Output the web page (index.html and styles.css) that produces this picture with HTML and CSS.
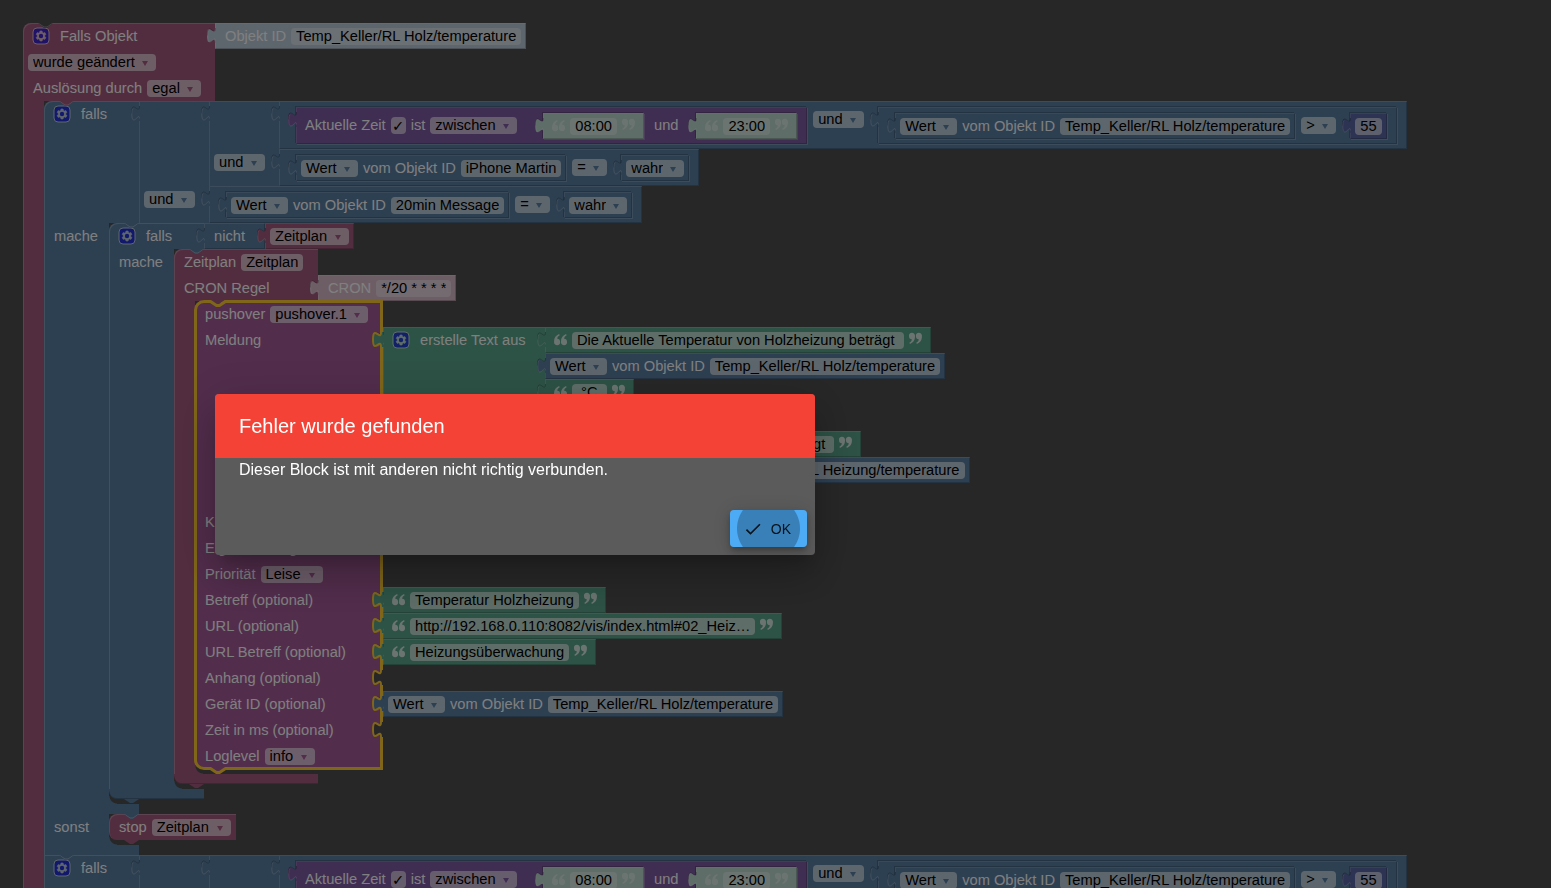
FILE: index.html
```html
<!DOCTYPE html>
<html lang="de">
<head>
<meta charset="utf-8">
<meta name="viewport" content="width=device-width, initial-scale=1">
<title>Blockly – Fehler wurde gefunden</title>
<link rel="stylesheet" href="styles.css">
</head>
<body>
<svg class="defs" aria-hidden="true">
  <symbol id="gear" viewBox="-1 -1 18 18">
    <rect width="16" height="16" rx="4" fill="#00f" stroke="#fff"/>
    <path fill="#fff" stroke="#fff" stroke-width=".5" d="m4.203,7.296 0,1.368 -0.92,0.677 -0.11,0.41 0.9,1.559 0.41,0.11 1.043,-0.457 1.187,0.683 0.127,1.134 0.3,0.3 1.8,0 0.3,-0.299 0.127,-1.138 1.185,-0.682 1.046,0.458 0.409,-0.11 0.9,-1.559 -0.11,-0.41 -0.92,-0.677 0,-1.366 0.92,-0.677 0.11,-0.41 -0.9,-1.559 -0.409,-0.109 -1.046,0.458 -1.185,-0.682 -0.127,-1.138 -0.3,-0.299 -1.8,0 -0.3,0.3 -0.126,1.135 -1.187,0.682 -1.043,-0.457 -0.41,0.11 -0.899,1.559 0.108,0.409z"/>
    <circle cx="8" cy="8" r="2.2" fill="#00f"/>
  </symbol>
  <symbol id="quote" viewBox="0 0 12 12">
    <path d="M5.600 8a2.800 2.800 0 1 1-5.500.2C-.2 4.800 1.600 2.200 4.700 1l.6 1.100C3.800 2.900 3 4 3 5.300A2.700 2.700 0 0 1 5.600 8z"/>
    <path d="M12 8a2.800 2.800 0 1 1-5.500.2C6.200 4.800 8 2.200 11.100 1l.6 1.100C10.200 2.900 9.400 4 9.400 5.300A2.700 2.700 0 0 1 12 8z"/>
  </symbol>
  <symbol id="socket" viewBox="0 0 12 20">
    <path fill="currentColor" d="M12 2H10c0 10-8-8-8 7.500c0 15.500 8-2.500 8 7.500h2z"/>
    <path fill="none" stroke="#fc3" stroke-width="2" d="M10 2c0 10-8-8-8 7.500c0 15.500 8-2.500 8 7.500"/>
  </symbol>
</svg>

<main class="workspace">
 <section class="stmt pink trigger">
  <div class="row">
   <div class="cell"><button class="gear" aria-label="Block bearbeiten"><svg><use href="#gear"/></svg></button><span>Falls Objekt</span></div>
   <div class="val pale-blue"><span>Objekt ID</span><label class="grow" data-v="Temp_Keller/RL Holz/temperature"><input size="1" aria-label="Objekt ID" value="Temp_Keller/RL Holz/temperature"></label></div>
  </div>
  <div class="row"><div class="cell"><label class="drop"><select aria-label="Bedingung"><option>wurde geändert</option></select></label></div></div>
  <div class="row"><div class="cell"><span>Auslösung durch</span><label class="drop"><select aria-label="Auslösung durch"><option>egal</option></select></label></div></div>
  <div class="row">
   <div class="arm"></div>
   <div class="stack">

    <section class="stmt blue branch above-pink">
     <div class="row">
      <div class="cell"><button class="gear" aria-label="Block bearbeiten"><svg><use href="#gear"/></svg></button><span>falls</span></div>
      <div class="val op">
       <div class="lead"></div>
       <div class="val op">
        <div class="lead"></div>
        <div class="val inline">
         <div class="val inline inset violet">
          <span>Aktuelle Zeit</span><input type="checkbox" checked aria-label="Aktuelle Zeit verwenden"><span>ist</span>
          <label class="drop"><select aria-label="Vergleich"><option>zwischen</option></select></label>
          <div class="val text inset pale-green after-drop"><svg class="q"><use href="#quote"/></svg><label class="grow" data-v="08:00"><input size="1" aria-label="Von" value="08:00"></label><svg class="q close"><use href="#quote"/></svg></div>
          <span class="between">und</span>
          <div class="val text inset pale-green"><svg class="q"><use href="#quote"/></svg><label class="grow" data-v="23:00"><input size="1" aria-label="Bis" value="23:00"></label><svg class="q close"><use href="#quote"/></svg></div>
         </div>
         <label class="drop"><select aria-label="Verknüpfung"><option>und</option></select></label>
         <div class="val inline inset">
          <div class="val inset"><label class="drop"><select aria-label="Attribut"><option>Wert</option></select></label><span>vom Objekt ID</span><label class="grow" data-v="Temp_Keller/RL Holz/temperature"><input size="1" aria-label="Objekt ID" value="Temp_Keller/RL Holz/temperature"></label></div>
          <label class="drop"><select aria-label="Operator"><option>&gt;</option></select></label>
          <div class="val inset indigo"><label class="grow" data-v="55"><input size="1" aria-label="Zahl" value="55"></label></div>
         </div>
        </div>
        <div class="lead"><label class="drop"><select aria-label="Verknüpfung"><option>und</option></select></label></div>
        <div class="val inline">
         <div class="val inset"><label class="drop"><select aria-label="Attribut"><option>Wert</option></select></label><span>vom Objekt ID</span><label class="grow" data-v="iPhone Martin"><input size="1" aria-label="Objekt ID" value="iPhone Martin"></label></div>
         <label class="drop"><select aria-label="Operator"><option>=</option></select></label>
         <div class="val inset"><label class="drop"><select aria-label="Wahrheitswert"><option>wahr</option></select></label></div>
        </div>
       </div>
       <div class="lead"><label class="drop"><select aria-label="Verknüpfung"><option>und</option></select></label></div>
       <div class="val inline">
        <div class="val inset"><label class="drop"><select aria-label="Attribut"><option>Wert</option></select></label><span>vom Objekt ID</span><label class="grow" data-v="20min Message"><input size="1" aria-label="Objekt ID" value="20min Message"></label></div>
        <label class="drop"><select aria-label="Operator"><option>=</option></select></label>
        <div class="val inset"><label class="drop"><select aria-label="Wahrheitswert"><option>wahr</option></select></label></div>
       </div>
      </div>
     </div>
     <div class="row">
      <div class="arm"><span>mache</span></div>
      <div class="stack">

       <section class="stmt blue branch above-blue">
        <div class="row">
         <div class="cell"><button class="gear" aria-label="Block bearbeiten"><svg><use href="#gear"/></svg></button><span>falls</span></div>
         <div class="val not"><span>nicht</span></div>
         <div class="val pink"><label class="drop"><select aria-label="Zeitplan"><option>Zeitplan</option></select></label></div>
        </div>
        <div class="row">
         <div class="arm"><span>mache</span></div>
         <div class="stack">

          <section class="stmt pink schedule above-blue">
           <div class="row"><div class="cell"><span>Zeitplan</span><label class="grow" data-v="Zeitplan"><input size="1" aria-label="Name" value="Zeitplan"></label></div></div>
           <div class="row">
            <div class="cell"><span>CRON Regel</span></div>
            <div class="val pale-pink"><span>CRON</span><label class="grow" data-v="*/20 * * * *"><input size="1" aria-label="CRON" value="*/20 * * * *"></label></div>
           </div>
           <div class="row">
            <div class="arm"></div>
            <div class="stack">

             <section class="stmt magenta message selected">
              <div class="row"><div class="cell"><span>pushover</span><label class="drop"><select aria-label="pushover"><option>pushover.1</option></select></label></div></div>
              <div class="row">
               <div class="cell"><span>Meldung</span></div>
               <div class="val join green">
                <div class="joinhead"><button class="gear" aria-label="Block bearbeiten"><svg><use href="#gear"/></svg></button><span>erstelle Text aus</span></div>
                <div class="list">
                 <div class="val text green"><svg class="q"><use href="#quote"/></svg><label class="grow" data-v="Die Aktuelle Temperatur von Holzheizung beträgt "><input size="1" aria-label="Text" value="Die Aktuelle Temperatur von Holzheizung beträgt "></label><svg class="q close"><use href="#quote"/></svg></div>
                 <div class="val blue"><label class="drop"><select aria-label="Attribut"><option>Wert</option></select></label><span>vom Objekt ID</span><label class="grow" data-v="Temp_Keller/RL Holz/temperature"><input size="1" aria-label="Objekt ID" value="Temp_Keller/RL Holz/temperature"></label></div>
                 <div class="val text green"><svg class="q"><use href="#quote"/></svg><label class="grow" data-v=" °C "><input size="1" aria-label="Text" value=" °C "></label><svg class="q close"><use href="#quote"/></svg></div>
                 <div class="val text green"><svg class="q"><use href="#quote"/></svg><label class="grow" data-v=", "><input size="1" aria-label="Text" value=", "></label><svg class="q close"><use href="#quote"/></svg></div>
                 <div class="val text green"><svg class="q"><use href="#quote"/></svg><label class="grow" data-v="Die Temperatur in der Heizung beträgt "><input size="1" aria-label="Text" value="Die Temperatur in der Heizung beträgt "></label><svg class="q close"><use href="#quote"/></svg></div>
                 <div class="val blue"><label class="drop"><select aria-label="Attribut"><option>Wert</option></select></label><span>vom Objekt ID</span><label class="grow" data-v="Temp_Keller/RL Heizung/temperature"><input size="1" aria-label="Objekt ID" value="Temp_Keller/RL Heizung/temperature"></label></div>
                 <div class="val text green"><svg class="q"><use href="#quote"/></svg><label class="grow" data-v=" °C "><input size="1" aria-label="Text" value=" °C "></label><svg class="q close"><use href="#quote"/></svg></div>
                </div>
               </div>
               <svg class="socket green"><use href="#socket"/></svg>
              </div>
              <div class="row"><div class="cell"><span>Klang</span></div></div>
              <div class="row"><div class="cell"><span>Eigener Klang</span></div></div>
              <div class="row"><div class="cell"><span>Priorität</span><label class="drop"><select aria-label="Priorität"><option>Leise</option></select></label></div></div>
              <div class="row">
               <div class="cell"><span>Betreff (optional)</span></div>
               <div class="val text green"><svg class="q"><use href="#quote"/></svg><label class="grow" data-v="Temperatur Holzheizung"><input size="1" aria-label="Betreff" value="Temperatur Holzheizung"></label><svg class="q close"><use href="#quote"/></svg></div>
               <svg class="socket green"><use href="#socket"/></svg>
              </div>
              <div class="row">
               <div class="cell"><span>URL (optional)</span></div>
               <div class="val text green"><svg class="q"><use href="#quote"/></svg><label class="grow" data-v="http://192.168.0.110:8082/vis/index.html#02_Heiz…"><input size="1" aria-label="URL" value="http://192.168.0.110:8082/vis/index.html#02_Heiz…"></label><svg class="q close"><use href="#quote"/></svg></div>
               <svg class="socket green"><use href="#socket"/></svg>
              </div>
              <div class="row">
               <div class="cell"><span>URL Betreff (optional)</span></div>
               <div class="val text green"><svg class="q"><use href="#quote"/></svg><label class="grow" data-v="Heizungsüberwachung"><input size="1" aria-label="URL Betreff" value="Heizungsüberwachung"></label><svg class="q close"><use href="#quote"/></svg></div>
               <svg class="socket green"><use href="#socket"/></svg>
              </div>
              <div class="row"><div class="cell"><span>Anhang (optional)</span></div><svg class="socket"><use href="#socket"/></svg></div>
              <div class="row">
               <div class="cell"><span>Gerät ID (optional)</span></div>
               <div class="val blue"><label class="drop"><select aria-label="Attribut"><option>Wert</option></select></label><span>vom Objekt ID</span><label class="grow" data-v="Temp_Keller/RL Holz/temperature"><input size="1" aria-label="Objekt ID" value="Temp_Keller/RL Holz/temperature"></label></div>
               <svg class="socket blue"><use href="#socket"/></svg>
              </div>
              <div class="row"><div class="cell"><span>Zeit in ms (optional)</span></div><svg class="socket"><use href="#socket"/></svg></div>
              <div class="row"><div class="cell"><span>Loglevel</span><label class="drop"><select aria-label="Loglevel"><option>info</option></select></label></div></div>
              <div class="outline"><svg class="notch-line" viewBox="0 0 21 8"><path d="M3 0h15l-6 4H9z" class="cut"/><path fill="none" stroke="#fc3" stroke-width="3" d="M0 1.500h3.500l6 4h3l6-4H21"/></svg><svg class="tab-line" viewBox="0 0 21 8"><path class="fill" d="M3 0h15v2l-6 4H9L3 2z"/><path fill="none" stroke="#fc3" stroke-width="3" d="M0 1.500h3.500l6 4h3l6-4H21"/></svg></div>
             </section>

            </div>
           </div>
           <div class="bar"></div>
          </section>

         </div>
        </div>
        <div class="bar"></div>
       </section>

      </div>
     </div>
     <div class="bar mid"></div>
     <div class="row">
      <div class="arm"><span>sonst</span></div>
      <div class="stack">
       <section class="stmt pink stop above-blue">
        <div class="row"><div class="cell"><span>stop</span><label class="drop"><select aria-label="Zeitplan stoppen"><option>Zeitplan</option></select></label></div></div>
       </section>
      </div>
     </div>
     <div class="bar last"></div>
    </section>

    <section class="stmt blue branch above-blue next">
     <div class="row">
      <div class="cell"><button class="gear" aria-label="Block bearbeiten"><svg><use href="#gear"/></svg></button><span>falls</span></div>
      <div class="val op">
       <div class="lead"></div>
       <div class="val op">
        <div class="lead"></div>
        <div class="val inline">
         <div class="val inline inset violet">
          <span>Aktuelle Zeit</span><input type="checkbox" checked aria-label="Aktuelle Zeit verwenden"><span>ist</span>
          <label class="drop"><select aria-label="Vergleich"><option>zwischen</option></select></label>
          <div class="val text inset pale-green after-drop"><svg class="q"><use href="#quote"/></svg><label class="grow" data-v="08:00"><input size="1" aria-label="Von" value="08:00"></label><svg class="q close"><use href="#quote"/></svg></div>
          <span class="between">und</span>
          <div class="val text inset pale-green"><svg class="q"><use href="#quote"/></svg><label class="grow" data-v="23:00"><input size="1" aria-label="Bis" value="23:00"></label><svg class="q close"><use href="#quote"/></svg></div>
         </div>
         <label class="drop"><select aria-label="Verknüpfung"><option>und</option></select></label>
         <div class="val inline inset">
          <div class="val inset"><label class="drop"><select aria-label="Attribut"><option>Wert</option></select></label><span>vom Objekt ID</span><label class="grow" data-v="Temp_Keller/RL Holz/temperature"><input size="1" aria-label="Objekt ID" value="Temp_Keller/RL Holz/temperature"></label></div>
          <label class="drop"><select aria-label="Operator"><option>&gt;</option></select></label>
          <div class="val inset indigo"><label class="grow" data-v="55"><input size="1" aria-label="Zahl" value="55"></label></div>
         </div>
        </div>
       </div>
      </div>
     </div>
    </section>

   </div>
  </div>
 </section>
</main>

<div class="backdrop"></div>
<div class="dialog" role="dialog" aria-modal="true" aria-labelledby="dialog-title">
  <h2 id="dialog-title">Fehler wurde gefunden</h2>
  <p>Dieser Block ist mit anderen nicht richtig verbunden.</p>
  <div class="actions">
    <button class="ok"><svg viewBox="0 0 24 24" aria-hidden="true"><path d="M9 16.170 4.830 12l-1.420 1.410L9 19 21 7l-1.410-1.410z"/></svg>OK</button>
  </div>
</div>
</body>
</html>
```
FILE: styles.css
```css
* { box-sizing: border-box; }

body {
  margin: 0;
  height: 100vh;
  overflow: hidden;
  background: #4f4f4f;
  font-family: "Liberation Sans", Arial, sans-serif;
}

input, select, button { font: inherit; margin: 0; border: 0; }
.defs { position: absolute; width: 0; height: 0; }

/* Workspace and block colours */
.workspace {
  padding: 23px;
  color: #fff;
  font-size: 11pt;
  line-height: 17px;
  white-space: nowrap;
}

.pink { --c: #a55b80; }
.blue { --c: #5b80a5; }
.green { --c: #5ba58c; }
.violet { --c: #805ba5; }
.magenta { --c: #a55b99; }
.indigo { --c: #5b67a5; }
.pale-blue { --c: #bdccdb; }
.pale-green { --c: #bddbd1; }
.pale-pink { --c: #dbbdcc; }
.above-pink { --above: #a55b80; }
.above-blue { --above: #5b80a5; }

/* Statement blocks */
.stmt { position: relative; width: max-content; }
.row { display: flex; position: relative; }

.cell, .arm, .bar, .lead, .joinhead { background: var(--c); flex: none; }

.cell {
  display: flex;
  align-items: flex-start;
  gap: 5px;
  width: var(--w);
  min-height: 26px;
  padding: 5px 5px 4px;
  box-shadow: inset 1px 0 rgba(255, 255, 255, .25);
}
.cell > span:first-child, .val > span:first-child { margin-left: 5px; }

.stmt > .row:first-child > .cell {
  border-top-left-radius: 8px;
  box-shadow: inset 1px 1px rgba(255, 255, 255, .25);
}
.stmt.next > .row:first-child > .cell { border-top-left-radius: 0; }

.arm {
  width: var(--arm);
  padding: 5px 0 0 10px;
  box-shadow: inset 1px 0 rgba(255, 255, 255, .25);
}

.bar {
  width: var(--w);
  height: 10px;
  border-bottom-left-radius: 8px;
  box-shadow: inset 0 -1px rgba(0, 0, 0, .2);
}
.bar.mid, .bar.last { border-radius: 0; box-shadow: inset 1px 0 rgba(255, 255, 255, .25); }

.stack { position: relative; padding-bottom: 5px; }
.stack::after {
  content: "";
  position: absolute;
  left: 0;
  bottom: 0;
  width: 8px;
  height: 8px;
  background: radial-gradient(circle at 100% 0, transparent 7px, var(--c) 8px);
}

.stmt::before {
  content: "";
  position: absolute;
  z-index: 1;
  top: 0;
  left: 15px;
  width: 15px;
  height: 5px;
  background:
    url("data:image/svg+xml,%3Csvg xmlns='http://www.w3.org/2000/svg' width='15' height='5'%3E%3Cpath d='M0 0l6 4h3l6-4' fill='none' stroke='white' stroke-opacity='.35'/%3E%3C/svg%3E"),
    var(--above, #4f4f4f);
  clip-path: polygon(0 0, 15px 0, 9px 5px, 6px 5px);
}
.stmt::after {
  content: "";
  position: absolute;
  z-index: 1;
  top: 100%;
  left: 15px;
  width: 15px;
  height: 4px;
  background: var(--c);
  clip-path: polygon(0 0, 15px 0, 9px 4px, 6px 4px);
}

.trigger { --w: 192px; --arm: 21px; }
.branch { --w: 95px; --arm: 65px; }
.schedule { --w: 144px; --arm: 21px; }
.message { --w: 188px; }
.stop { --w: auto; }
.stmt.stop > .row > .cell { border-radius: 8px 0 0 8px; }

/* Value blocks with a puzzle tab on the left */
.val {
  position: relative;
  display: flex;
  align-items: flex-start;
  gap: 5px;
  flex: none;
  width: max-content;
  min-height: 26px;
  padding: 5px 5px 4px;
  background: var(--c);
  box-shadow: inset 1px 1px rgba(255, 255, 255, .2), inset -1px -1px rgba(0, 0, 0, .2);
}
.val::before, .val::after {
  content: "";
  position: absolute;
  top: 5px;
  left: -8px;
  width: 9px;
  height: 15px;
}
.val::before {
  background: var(--c);
  clip-path: path("M9 0H8c0 10-8-8-8 7.5c0 15.5 8-2.5 8 7.5h1z");
}
.val::after {
  background: url("data:image/svg+xml,%3Csvg xmlns='http://www.w3.org/2000/svg' width='9' height='15'%3E%3Cpath d='M8.5 0c0 10-8-8-8 7.5' fill='none' stroke='black' stroke-opacity='.2'/%3E%3Cpath d='M2 2.500Q.8 4 .8 7.500c0 15.500 8-2.500 7.500 5' fill='none' stroke='white' stroke-opacity='.25'/%3E%3C/svg%3E");
}

.val.op {
  display: grid;
  grid-template-columns: 70px auto;
  align-items: stretch;
  justify-items: start;
  gap: 0;
  padding: 0;
  background: none;
  box-shadow: none;
}
.lead {
  justify-self: stretch;
  padding: 5px 0 0 5px;
  box-shadow: inset 1px 0 rgba(255, 255, 255, .2);
}
.lead:first-child { box-shadow: inset 1px 1px rgba(255, 255, 255, .2); }

.val.inline { gap: 6px; padding: 6px 10px 5px 9px; }
.val.inline > .drop { margin-top: 4px; }
.inset { margin-left: 8px; }
.val.inset {
  box-shadow: -1px -1px rgba(0, 0, 0, .2), 1px 1px rgba(255, 255, 255, .2),
    inset 1px 1px rgba(255, 255, 255, .15), inset -1px -1px rgba(0, 0, 0, .2);
}

.val.violet > span, .val.violet > input, .val.inline.violet > .drop { margin-top: 4px; }
.val.violet > span:first-child { margin-left: 0; }
.val.violet { gap: 5px; }
.val.violet .after-drop { margin-left: 21px; }
.val.violet .between { margin: 4px 5px 0; }

.val.not { width: 61px; }
.val.text { padding: 5px 10px 4px; }
.val.join { align-items: stretch; padding: 0; gap: 0; background: none; box-shadow: none; }
.joinhead {
  display: flex;
  align-items: flex-start;
  gap: 5px;
  width: 162px;
  padding: 5px 5px 4px;
  box-shadow: inset 1px 1px rgba(255, 255, 255, .2);
}
.list { display: flex; flex-direction: column; }

/* Fields */
.grow { display: inline-grid; height: 17px; }
.grow::after {
  content: attr(data-v);
  grid-area: 1 / 1;
  visibility: hidden;
  height: 17px;
  padding: 0 5px;
  white-space: pre;
}
.grow input {
  grid-area: 1 / 1;
  width: 0;
  min-width: 100%;
  height: 17px;
  padding: 0 5px;
}
.grow input, select, input[type="checkbox"] {
  border-radius: 4px;
  background: rgba(255, 255, 255, .6);
  color: #000;
  outline: 0;
}

.pale-blue .grow input, .pale-green .grow input, .pale-pink .grow input { background: rgba(255, 255, 255, .4); }

.drop { position: relative; display: inline-flex; height: 17px; }
select {
  appearance: none;
  height: 17px;
  padding: 0 21px 0 5px;
}
.drop::after {
  content: "";
  position: absolute;
  top: 7px;
  right: 8px;
  border: 3px solid transparent;
  border-top: 5px solid var(--c);
  border-bottom: 0;
  pointer-events: none;
}

input[type="checkbox"] {
  appearance: none;
  display: grid;
  place-items: center;
  width: 15px;
  height: 17px;
}
input[type="checkbox"]:checked::before {
  content: "✓";
  font-family: "DejaVu Sans", sans-serif;
}

.gear {
  width: 18px;
  height: 18px;
  margin: -1px 5px -1px 4px;
  padding: 0;
  background: none;
  opacity: .6;
}
.gear svg { display: block; width: 18px; height: 18px; }

.q { width: 13px; height: 13px; margin: 1px 0 0 -1px; fill: #fff; opacity: .75; }
.q.close { margin: 0 -1px 0 0; transform: rotate(180deg); }
.pale-green .q { opacity: .4; }

/* Selected block */
.selected::before, .selected::after { display: none; }
.selected .cell { box-shadow: none; }
.selected > .row:nth-last-child(2) > .cell { border-bottom-left-radius: 8px; }
.outline {
  position: absolute;
  top: -1px;
  bottom: -1px;
  left: -1px;
  width: 189px;
  border: 3px solid #fc3;
  border-radius: 10px 0 0 10px;
  pointer-events: none;
}
.outline svg { position: absolute; left: 10px; width: 21px; height: 8px; }
.notch-line { top: -3px; }
.tab-line { bottom: -8px; }
.outline .cut { fill: #a55b80; }
.outline .fill { fill: #a55b99; }
.socket {
  position: absolute;
  z-index: 2;
  top: 3px;
  left: 176px;
  width: 12px;
  height: 20px;
  color: var(--c);
}
.socket:not(.green):not(.blue) { color: #4f4f4f; }

/* Modal */
.backdrop { position: fixed; z-index: 10; inset: 0; background: rgba(0, 0, 0, .5); }

.dialog {
  position: fixed;
  z-index: 11;
  top: 394px;
  left: 215px;
  width: 600px;
  border-radius: 4px;
  overflow: hidden;
  background: #5b5b5b;
  color: #fff;
  font-size: 16px;
  line-height: 24px;
  box-shadow: 0 11px 15px -7px rgba(0, 0, 0, .2), 0 24px 38px 3px rgba(0, 0, 0, .14), 0 9px 46px 8px rgba(0, 0, 0, .12);
}
.dialog h2 {
  margin: 0;
  padding: 16px 24px;
  background: #f44336;
  font-size: 20px;
  font-weight: 400;
  line-height: 32px;
}
.dialog p { margin: 0; padding: 0 24px 20px; }
.actions { display: flex; justify-content: flex-end; padding: 8px; }
.ok {
  display: flex;
  align-items: center;
  gap: 8px;
  height: 37px;
  padding: 0 16px 0 13px;
  border-radius: 4px;
  background: radial-gradient(circle, #3a80b8 31px, #4dabf5 32px);
  color: rgba(0, 0, 0, .87);
  font-size: 14px;
  box-shadow: 0 3px 5px -1px rgba(0, 0, 0, .2), 0 6px 10px rgba(0, 0, 0, .14), 0 1px 18px rgba(0, 0, 0, .12);
}
.ok svg { width: 20px; height: 20px; fill: currentColor; }
```
